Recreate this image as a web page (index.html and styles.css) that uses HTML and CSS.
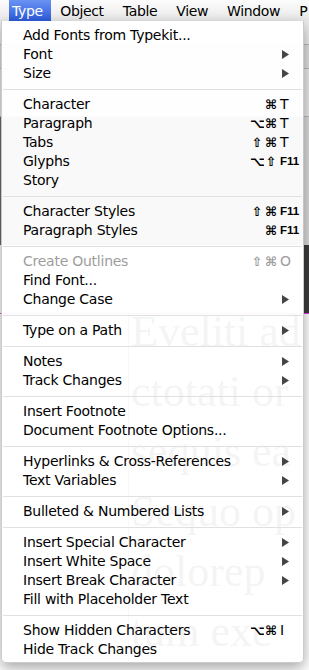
FILE: index.html
```html
<!DOCTYPE html>
<html>
<head>
<meta charset="utf-8">
<link rel="stylesheet" href="styles.css">
</head>
<body>
<div class="screen">
  <header class="menubar">
    <span class="mb-item active">Type</span>
    <span class="mb-item">Object</span>
    <span class="mb-item">Table</span>
    <span class="mb-item">View</span>
    <span class="mb-item">Window</span>
    <span class="mb-item">P</span>
  </header>

  <div class="workspace">
    <div class="chrome">
      <div class="chrome-band b1"></div>
      <div class="chrome-band b2"></div>
      <div class="chrome-band b3"></div>
    </div>
    <div class="control">
      <div class="control-main"></div>
      <div class="control-side"></div>
    </div>
    <div class="doc">
      <div class="doc-top">
        <div class="doc-top-main"></div>
        <div class="dock"></div>
      </div>
      <div class="guide"></div>
      <div class="frame">
        <p>Eveliti ad</p>
        <p>ctotati or</p>
        <p>sequis ea</p>
        <p>Sequo op</p>
        <p>dolorep</p>
        <p>tum exc</p>
      </div>
    </div>
  </div>

  <div class="menu">
    <div class="item"><span class="label">Add Fonts from Typekit...</span><span class="mods"></span><span class="key"></span></div>
    <div class="item"><span class="label">Font</span><span class="mods"></span><span class="key"><svg class="arrow" width="7" height="9" viewBox="0 0 7 9"><polygon points="0,0 7,4.5 0,9"/></svg></span></div>
    <div class="item"><span class="label">Size</span><span class="mods"></span><span class="key"><svg class="arrow" width="7" height="9" viewBox="0 0 7 9"><polygon points="0,0 7,4.5 0,9"/></svg></span></div>
    <div class="sep"></div>
    <div class="item"><span class="label">Character</span><span class="mods"><span class="mod">⌘</span></span><span class="key">T</span></div>
    <div class="item"><span class="label">Paragraph</span><span class="mods"><span class="mod">⌥</span><span class="mod">⌘</span></span><span class="key">T</span></div>
    <div class="item"><span class="label">Tabs</span><span class="mods"><span class="mod">⇧</span><span class="mod">⌘</span></span><span class="key">T</span></div>
    <div class="item"><span class="label">Glyphs</span><span class="mods"><span class="mod">⌥</span><span class="mod">⇧</span></span><span class="key fkey">F11</span></div>
    <div class="item"><span class="label">Story</span><span class="mods"></span><span class="key"></span></div>
    <div class="sep"></div>
    <div class="item"><span class="label">Character Styles</span><span class="mods"><span class="mod">⇧</span><span class="mod">⌘</span></span><span class="key fkey">F11</span></div>
    <div class="item"><span class="label">Paragraph Styles</span><span class="mods"><span class="mod">⌘</span></span><span class="key fkey">F11</span></div>
    <div class="sep"></div>
    <div class="item disabled"><span class="label">Create Outlines</span><span class="mods"><span class="mod">⇧</span><span class="mod">⌘</span></span><span class="key">O</span></div>
    <div class="item"><span class="label">Find Font...</span><span class="mods"></span><span class="key"></span></div>
    <div class="item"><span class="label">Change Case</span><span class="mods"></span><span class="key"><svg class="arrow" width="7" height="9" viewBox="0 0 7 9"><polygon points="0,0 7,4.5 0,9"/></svg></span></div>
    <div class="sep"></div>
    <div class="item"><span class="label">Type on a Path</span><span class="mods"></span><span class="key"><svg class="arrow" width="7" height="9" viewBox="0 0 7 9"><polygon points="0,0 7,4.5 0,9"/></svg></span></div>
    <div class="sep"></div>
    <div class="item"><span class="label">Notes</span><span class="mods"></span><span class="key"><svg class="arrow" width="7" height="9" viewBox="0 0 7 9"><polygon points="0,0 7,4.5 0,9"/></svg></span></div>
    <div class="item"><span class="label">Track Changes</span><span class="mods"></span><span class="key"><svg class="arrow" width="7" height="9" viewBox="0 0 7 9"><polygon points="0,0 7,4.5 0,9"/></svg></span></div>
    <div class="sep"></div>
    <div class="item"><span class="label">Insert Footnote</span><span class="mods"></span><span class="key"></span></div>
    <div class="item"><span class="label">Document Footnote Options...</span><span class="mods"></span><span class="key"></span></div>
    <div class="sep"></div>
    <div class="item"><span class="label">Hyperlinks &amp; Cross-References</span><span class="mods"></span><span class="key"><svg class="arrow" width="7" height="9" viewBox="0 0 7 9"><polygon points="0,0 7,4.5 0,9"/></svg></span></div>
    <div class="item"><span class="label">Text Variables</span><span class="mods"></span><span class="key"><svg class="arrow" width="7" height="9" viewBox="0 0 7 9"><polygon points="0,0 7,4.5 0,9"/></svg></span></div>
    <div class="sep"></div>
    <div class="item"><span class="label">Bulleted &amp; Numbered Lists</span><span class="mods"></span><span class="key"><svg class="arrow" width="7" height="9" viewBox="0 0 7 9"><polygon points="0,0 7,4.5 0,9"/></svg></span></div>
    <div class="sep"></div>
    <div class="item"><span class="label">Insert Special Character</span><span class="mods"></span><span class="key"><svg class="arrow" width="7" height="9" viewBox="0 0 7 9"><polygon points="0,0 7,4.5 0,9"/></svg></span></div>
    <div class="item"><span class="label">Insert White Space</span><span class="mods"></span><span class="key"><svg class="arrow" width="7" height="9" viewBox="0 0 7 9"><polygon points="0,0 7,4.5 0,9"/></svg></span></div>
    <div class="item"><span class="label">Insert Break Character</span><span class="mods"></span><span class="key"><svg class="arrow" width="7" height="9" viewBox="0 0 7 9"><polygon points="0,0 7,4.5 0,9"/></svg></span></div>
    <div class="item"><span class="label">Fill with Placeholder Text</span><span class="mods"></span><span class="key"></span></div>
    <div class="sep"></div>
    <div class="item"><span class="label">Show Hidden Characters</span><span class="mods"><span class="mod">⌥</span><span class="mod">⌘</span></span><span class="key">I</span></div>
    <div class="item"><span class="label">Hide Track Changes</span><span class="mods"></span><span class="key"></span></div>
  </div>
</div>
</body>
</html>
```

FILE: styles.css
```css
* { box-sizing: border-box; margin: 0; padding: 0; }
html, body { width: 309px; height: 670px; overflow: hidden; background: #fff; }
body { font-family: "DejaVu Sans", sans-serif; }

.screen { position: relative; width: 309px; height: 670px; overflow: hidden; }

/* menu bar */
.menubar {
  height: 21px;
  display: flex;
  white-space: nowrap;
  background: linear-gradient(#fcfcfc, #e9e9e9);
  font-size: 14px;
  letter-spacing: -0.35px;
  color: #000;
}
.mb-item { height: 21px; line-height: 21px; padding: 1px 9.5px 0; flex: none; }
.mb-item.active {
  margin-left: 9px;
  padding: 1px 8px 0 3px;
  color: #fff;
  background: linear-gradient(#6a93f3, #2c5adb);
}

/* background workspace */
.workspace { display: flex; flex-direction: column; }
.chrome { height: 96px; display: flex; flex-direction: column; background: #e6e6e6; }
.chrome-band { border-bottom: 1px solid #b9b9b9; }
.b1 { height: 24px; background: #ececec; }
.b2 { height: 24px; background: #dedede; }
.b3 { flex: 1; background: #e8e8e8; }

.control { height: 128px; display: flex; }
.control-main { flex: 1; background: #6c6c6c; }
.control-side { width: 5px; background: #d9d9d9; }

.doc { flex: 1; background: #fff; }
.doc-top { height: 68px; display: flex; }
.doc-top-main { flex: 1; background: #fff; }
.dock { width: 5px; background: #3c3c3c; }
.guide { height: 1px; background: #e23ce6; }
.frame {
  margin: -12px 0 0 128px;
  padding-left: 2px;
  border-left: 1px solid #8a3cc9;
  font-family: "Liberation Serif", serif;
  font-size: 44px;
  line-height: 60px;
  color: #000;
  white-space: nowrap;
}

/* dropdown menu */
.menu {
  position: absolute;
  top: 21px;
  left: 1px;
  width: 303px;
  padding: 5px 0 3px;
  background: rgba(255, 255, 255, 0.955);
  border: 1px solid rgba(0, 0, 0, 0.2);
  border-top: none;
  border-radius: 0 0 5px 5px;
  box-shadow: 0 5px 14px rgba(0, 0, 0, 0.35);
  font-size: 14px;
  color: #000;
}
.item {
  display: grid;
  grid-template-columns: 1fr auto 22px;
  height: 19px;
  line-height: 19px;
  padding: 0 1px 0 21px;
  white-space: nowrap;
}
.label { letter-spacing: -0.25px; }
.mods { padding-right: 2px; display: flex; }
.mod { display: inline-block; width: 14px; text-align: center; font-size: 13px; font-weight: bold; overflow: hidden; }
.key { display: flex; align-items: center; }
.fkey { font-family: "Liberation Sans", sans-serif; font-weight: bold; font-size: 11.5px; }
.arrow { margin-left: 2px; fill: #454545; }
.disabled { color: #9d9d9d; }

.sep { height: 12px; padding-top: 6px; }
.sep::before { content: ""; display: block; height: 1px; margin: 0 1px; background: #e0e0e0; }
```
